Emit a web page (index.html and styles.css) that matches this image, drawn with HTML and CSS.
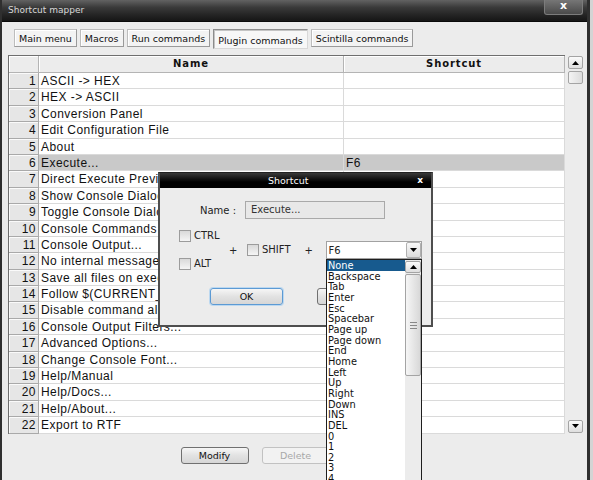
FILE: index.html
```html
<!DOCTYPE html>
<html lang="en">
    <head>
        <title>Shortcut mapper</title>
        <link rel="stylesheet" href="styles.css">
    </head>
    <body>
        <div class="window">
            <div class="titlebar">
                <span class="title">Shortcut mapper</span>
                <span class="close">x</span>
            </div>

            <div class="content">
                <div class="tabs">
                    <button class="tab">Main menu</button>
                    <button class="tab">Macros</button>
                    <button class="tab">Run commands</button>
                    <button class="tab active">Plugin commands</button>
                    <button class="tab">Scintilla commands</button>
                </div>

                <div class="table-area">
                    <div class="grid">
                        <div class="hcell"></div><div class="hcell">Name</div><div class="hcell">Shortcut</div>

                        <div class="num">1</div><div class="cell">ASCII -&gt; HEX</div><div class="cell"></div>
                        <div class="num">2</div><div class="cell">HEX -&gt; ASCII</div><div class="cell"></div>
                        <div class="num">3</div><div class="cell">Conversion Panel</div><div class="cell"></div>
                        <div class="num">4</div><div class="cell">Edit Configuration File</div><div class="cell"></div>
                        <div class="num">5</div><div class="cell">About</div><div class="cell"></div>
                        <div class="num">6</div><div class="cell sel">Execute...</div><div class="cell sel">F6</div>
                        <div class="num">7</div><div class="cell">Direct Execute Previous</div><div class="cell"></div>
                        <div class="num">8</div><div class="cell">Show Console Dialog</div><div class="cell"></div>
                        <div class="num">9</div><div class="cell">Toggle Console Dialog</div><div class="cell"></div>
                        <div class="num">10</div><div class="cell">Console Commands History</div><div class="cell"></div>
                        <div class="num">11</div><div class="cell">Console Output...</div><div class="cell"></div>
                        <div class="num">12</div><div class="cell">No internal messages</div><div class="cell"></div>
                        <div class="num">13</div><div class="cell">Save all files on execute</div><div class="cell"></div>
                        <div class="num">14</div><div class="cell">Follow $(CURRENT_DIRECTORY)</div><div class="cell"></div>
                        <div class="num">15</div><div class="cell">Disable command aliases</div><div class="cell"></div>
                        <div class="num">16</div><div class="cell">Console Output Filters...</div><div class="cell"></div>
                        <div class="num">17</div><div class="cell">Advanced Options...</div><div class="cell"></div>
                        <div class="num">18</div><div class="cell">Change Console Font...</div><div class="cell"></div>
                        <div class="num">19</div><div class="cell">Help/Manual</div><div class="cell"></div>
                        <div class="num">20</div><div class="cell">Help/Docs...</div><div class="cell"></div>
                        <div class="num">21</div><div class="cell">Help/About...</div><div class="cell"></div>
                        <div class="num">22</div><div class="cell">Export to RTF</div><div class="cell"></div>
                    </div>

                    <div class="vscroll">
                        <div class="sbtn"><svg width="7" height="4" viewBox="0 0 7 4"><path d="M0 4 L3.5 0 L7 4 Z"/></svg></div>
                        <div class="sthumb"></div>
                        <div class="strack"></div>
                        <div class="sbtn"><svg width="7" height="4" viewBox="0 0 7 4"><path d="M0 0 L7 0 L3.5 4 Z"/></svg></div>
                    </div>
                </div>

                <div class="actions">
                    <button class="btn">Modify</button>
                    <button class="btn" disabled>Delete</button>
                    <button class="btn">Close</button>
                </div>
            </div>

            <!-- the key picker that opens on Modify -->
            <div class="dialog">
                <div class="dlg-title">
                    <span>Shortcut</span>
                    <span class="dlg-x">x</span>
                </div>
                <div class="dlg-body">
                    <div class="name-row">
                        <span class="name-label">Name :</span>
                        <div class="name-box">Execute...</div>
                    </div>

                    <div class="keys-row">
                        <div class="mods">
                            <label class="check"><span class="box"></span>CTRL</label>
                            <label class="check"><span class="box"></span>ALT</label>
                        </div>
                        <span class="plus">+</span>
                        <label class="check shift"><span class="box"></span>SHIFT</label>
                        <span class="plus plus2">+</span>
                        <div class="combo">
                            <span class="combo-val">F6</span>
                            <span class="combo-btn"><svg width="7" height="4" viewBox="0 0 7 4"><path d="M0 0 L7 0 L3.5 4 Z"/></svg></span>
                        </div>
                    </div>

                    <div class="dlg-buttons">
                        <button class="btn ok">OK</button>
                        <button class="btn cancel">Cancel</button>
                    </div>
                </div>
            </div>

            <div class="droplist">
                <ul class="items">
                    <li class="picked">None</li>
                    <li>Backspace</li>
                    <li>Tab</li>
                    <li>Enter</li>
                    <li>Esc</li>
                    <li>Spacebar</li>
                    <li>Page up</li>
                    <li>Page down</li>
                    <li>End</li>
                    <li>Home</li>
                    <li>Left</li>
                    <li>Up</li>
                    <li>Right</li>
                    <li>Down</li>
                    <li>INS</li>
                    <li>DEL</li>
                    <li>0</li>
                    <li>1</li>
                    <li>2</li>
                    <li>3</li>
                    <li>4</li>
                </ul>
                <div class="lscroll">
                    <div class="sbtn lbtn"><svg width="7" height="4" viewBox="0 0 7 4"><path d="M0 4 L3.5 0 L7 4 Z"/></svg></div>
                    <div class="lthumb"><span class="grip"></span></div>
                </div>
            </div>
        </div>
    </body>
</html>
```

FILE: styles.css
```css
html, body{
    margin: 0;
    padding: 0;
}
body{
    width: 593px;
    height: 480px;
    overflow: hidden;
    background-color: #d4d4d4;
    font-family: "DejaVu Sans", sans-serif;
}

.window{
    position: relative;
    width: 590px;
    height: 480px;
    box-sizing: border-box;
    border-left: 2px solid #2f2f2f;
    border-right: 3px solid #2f2f2f;
    background-color: #ececec;
    display: flex;
    flex-direction: column;
}

/* title bar */
.titlebar{
    height: 21px;
    flex: none;
    display: flex;
    justify-content: space-between;
    align-items: flex-start;
    background: linear-gradient(to bottom, #626262 0%, #3a3a3a 35%, #222 75%, #161616 100%);
    border-bottom: 1px solid #0a0a0a;
}
.title{
    color: #d8d8d8;
    font-size: 9px;
    padding: 5px 0 0 6px;
}
.close{
    width: 39px;
    height: 15px;
    margin-right: 4px;
    box-sizing: border-box;
    border: 1px solid #7c7c7c;
    border-top: none;
    border-radius: 0 0 3px 3px;
    background: linear-gradient(to bottom, #767676, #4a4a4a);
    color: #fff;
    font-weight: bold;
    font-size: 11px;
    line-height: 12px;
    text-align: center;
}

.content{
    flex: 1;
    padding: 7px 4px 0 6px;
    display: flex;
    flex-direction: column;
}

/* tabs */
.tabs{
    display: flex;
    align-items: flex-start;
    gap: 3px;
    padding-left: 6px;
    height: 20px;
}
.tab{
    height: 18px;
    padding: 0 4px;
    font-family: "DejaVu Sans", sans-serif;
    font-size: 9.5px;
    color: #111;
    background: #f3f3f3;
    border: 1px solid #bdbdbd;
    border-right-color: #9a9a9a;
    border-bottom-color: #9a9a9a;
    box-shadow: inset 1px 1px #fff;
}
.tab.active{
    height: 20px;
    background: #f7f7f7;
    border-color: #8c8c8c #d8d8d8 #d8d8d8 #8c8c8c;
    box-shadow: inset 1px 1px #c4c4c4;
    padding-top: 2px;
}

/* command table */
.table-area{
    display: flex;
    margin-top: 6px;
}
.grid{
    display: grid;
    grid-template-columns: 30px 305px 221px;
    grid-template-rows: 17px repeat(22, 16.4px);
    border-top: 1px solid #6f6f6f;
    border-left: 1px solid #6f6f6f;
    font-family: "Liberation Sans", Arial, sans-serif;
    font-size: 12px;
    letter-spacing: 0.45px;
    color: #111;
}
.hcell{
    background: #ececec;
    box-sizing: border-box;
    border-right: 1px solid #b4b4b4;
    border-bottom: 1px solid #b4b4b4;
    box-shadow: inset 1px 1px #fff;
    font-family: "DejaVu Sans", sans-serif;
    font-weight: bold;
    font-size: 10px;
    letter-spacing: 0.9px;
    text-align: center;
    line-height: 16px;
}
.num{
    background: #e6e6e6;
    box-sizing: border-box;
    border-right: 1px solid #a9a9a9;
    border-bottom: 1px solid #a9a9a9;
    box-shadow: inset 1px 1px #fafafa;
    text-align: right;
    padding-right: 2px;
    line-height: 17px;
}
.cell{
    background: #fff;
    box-sizing: border-box;
    border-right: 1px solid #dadada;
    border-bottom: 1px solid #dadada;
    padding-left: 2px;
    line-height: 17px;
    white-space: nowrap;
    overflow: hidden;
}
.cell.sel{
    background: #c9c9c9;
}

.vscroll{
    width: 15px;
    margin-left: 3px;
    padding-top: 1px;
    display: flex;
    flex-direction: column;
}
.sbtn{
    height: 13px;
    box-sizing: border-box;
    border: 1px solid #a4a4a4;
    border-radius: 2px;
    background: linear-gradient(to bottom, #fbfbfb, #dedede);
    display: flex;
    align-items: center;
    justify-content: center;
}
.sthumb{
    height: 13px;
    margin-top: 2px;
    box-sizing: border-box;
    border: 1px solid #a4a4a4;
    border-radius: 2px;
    background: linear-gradient(to right, #f4f4f4, #dcdcdc);
}
.strack{
    flex: 1;
}
.vscroll .sbtn:last-child{
    margin-bottom: 1px;
}

/* bottom buttons */
.actions{
    display: flex;
    justify-content: center;
    gap: 13px;
    margin-top: 13px;
}
.btn{
    width: 68px;
    height: 17px;
    padding: 0;
    font-family: "DejaVu Sans", sans-serif;
    font-size: 9.5px;
    color: #111;
    border: 1px solid #707070;
    border-radius: 3px;
    background: linear-gradient(to bottom, #f6f6f6, #e2e2e2 50%, #d6d6d6);
}
.btn:disabled{
    color: #a8a8a8;
    border-color: #c2c2c2;
    background: #f2f2f2;
}

/* shortcut dialog */
.dialog{
    position: absolute;
    left: 156px;
    top: 172px;
    width: 275px;
    height: 155px;
    box-sizing: border-box;
    border: 2px solid #4e4e4e;
    border-top: 1px solid #222;
    background: #ececec;
    font-size: 10px;
    color: #222;
}
.dlg-title{
    height: 15px;
    background: linear-gradient(to bottom, #3a3a3a, #000 60%);
    color: #fff;
    font-size: 9.5px;
    line-height: 15px;
    display: flex;
    justify-content: space-between;
    padding: 0 8px 0 108px;
}
.dlg-x{
    font-weight: bold;
    font-size: 9px;
}
.dlg-body{
    padding: 13px 0 0 40px;
}
.name-row{
    display: flex;
    align-items: center;
    gap: 12px;
}
.name-label{
    width: 33px;
    white-space: nowrap;
}
.name-box{
    width: 140px;
    height: 18px;
    box-sizing: border-box;
    border: 1px solid #a9a9a9;
    background: #e8e8e8;
    padding-left: 5px;
    line-height: 15px;
    color: #333;
}

.keys-row{
    display: flex;
    align-items: center;
    margin: 11px 0 0 -21px;
    height: 40px;
}
.mods{
    width: 50px;
    height: 40px;
    display: flex;
    flex-direction: column;
    justify-content: space-between;
}
.check{
    display: flex;
    align-items: center;
    gap: 3px;
    line-height: 12px;
}
.box{
    width: 12px;
    height: 12px;
    box-sizing: border-box;
    border: 1px solid #9c9c9c;
    background: linear-gradient(to bottom, #d9d9d9, #f5f5f5);
}
.plus{
    width: 7px;
    text-align: center;
}
.shift{
    margin-left: 11px;
}
.plus2{
    margin-left: 14px;
}
.combo{
    margin-left: 14px;
    width: 96px;
    height: 18px;
    box-sizing: border-box;
    border: 1px solid #a2a2a2;
    background: #fff;
    display: flex;
    justify-content: space-between;
    align-items: center;
}
.combo-val{
    padding-left: 2px;
}
.combo-btn{
    width: 15px;
    height: 16px;
    box-sizing: border-box;
    border: 1px solid #b0b0b0;
    border-radius: 2px;
    background: linear-gradient(to bottom, #f8f8f8, #dcdcdc);
    display: flex;
    align-items: center;
    justify-content: center;
}
.dlg-buttons{
    display: flex;
    gap: 34px;
    margin: 18px 0 0 10px;
}
.btn.ok{
    width: 73px;
    border-color: #5c9ad4;
    box-shadow: 0 0 0 1px #bcd8f0;
}
.btn.cancel{
    width: 73px;
}

/* open key list of the combo */
.droplist{
    position: absolute;
    left: 324px;
    top: 259px;
    width: 96px;
    height: 240px;
    box-sizing: border-box;
    border: 1px solid #1e1e1e;
    background: #fff;
    display: flex;
}
.items{
    list-style: none;
    margin: 0;
    padding: 0;
    flex: 1;
    font-size: 9.8px;
    color: #111;
}
.items li{
    height: 10.67px;
    line-height: 11px;
    padding-left: 1px;
    white-space: nowrap;
}
.items li.picked{
    background: #175a8e;
    color: #fff;
}
.lscroll{
    width: 16px;
    display: flex;
    flex-direction: column;
    background: #ececec;
}
.lbtn{
    margin-top: 1px;
    height: 12px;
}
.lthumb{
    height: 102px;
    margin-top: 1px;
    box-sizing: border-box;
    border: 1px solid #a4a4a4;
    border-radius: 2px;
    background: linear-gradient(to right, #f6f6f6, #d8d8d8);
    display: flex;
    align-items: center;
    justify-content: center;
}
.grip{
    width: 7px;
    height: 5px;
    border-top: 1px solid #888;
    border-bottom: 1px solid #888;
    background: linear-gradient(#888, #888) center / 7px 1px no-repeat;
}
```
